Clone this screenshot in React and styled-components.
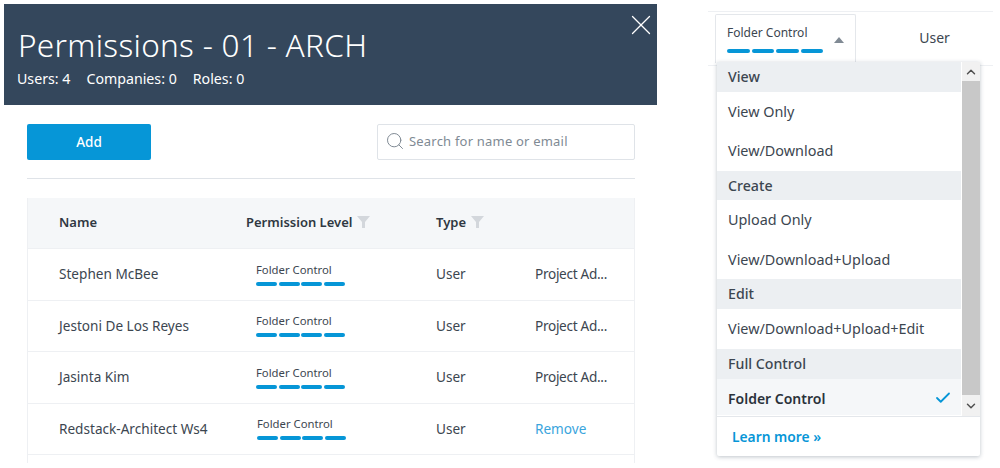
import React from "react";
import styled, { createGlobalStyle } from "styled-components";
import { X, Search, Check, ChevronUp, ChevronDown } from "lucide-react";

const GlobalStyle = createGlobalStyle`
  html, body {
    margin: 0;
    padding: 0;
    background: #fff;
    overflow: hidden;
  }
  body {
    font-family: "Noto Sans", "Open Sans", sans-serif;
    color: #3c4650;
  }
`;

const Page = styled.div`
  width: 1000px;
  height: 468px;
  display: flex;
  overflow: hidden;
`;

const Permissions = styled.div`
  width: 653px;
  margin: 4px 0 0 4px;
`;

const Banner = styled.div`
  position: relative;
  height: 101px;
  background: #34475c;
  color: #fff;
  padding: 22px 0 0 14px;
  box-sizing: border-box;
`;

const Title = styled.h1`
  margin: 0;
  font-size: 31.5px;
  font-weight: 300;
  line-height: 38px;
  letter-spacing: 0.3px;
`;

const Counts = styled.div`
  display: flex;
  gap: 16px;
  margin: 5px 0 0 -1px;
  font-size: 14.2px;
  line-height: 20px;
`;

const Close = styled.button`
  position: absolute;
  top: 4px;
  right: -1px;
  padding: 0;
  border: 0;
  background: none;
  color: #fff;
  display: flex;
`;

const Body = styled.div`
  padding: 19px 22px 0 23px;
`;

const Toolbar = styled.div`
  display: flex;
  justify-content: space-between;
  align-items: flex-start;
  height: 55px;
  box-sizing: border-box;
  border-bottom: 1px solid #dfe3e8;
`;

const AddButton = styled.button`
  width: 124px;
  height: 36px;
  border: 0;
  border-radius: 2px;
  background: #0696d7;
  color: #fff;
  font-family: inherit;
  font-size: 13.5px;
  font-weight: 500;
`;

const SearchBox = styled.div`
  width: 258px;
  height: 36px;
  box-sizing: border-box;
  border: 1px solid #dfe3e8;
  border-radius: 2px;
  display: flex;
  align-items: center;
  gap: 4px;
  padding: 0 7px 2px;
  color: #808a94;
  font-size: 13px;
  letter-spacing: 0.2px;
`;

const Table = styled.div`
  margin-top: 19px;
  border: solid #eef0f3;
  border-width: 0 1px;
  height: 265px;
`;

const Row = styled.div`
  display: grid;
  grid-template-columns: 187px 190px 99px 1fr;
  align-items: center;
  padding: 0 0 2px 31px;
  height: ${(p) => p.$height}px;
  box-sizing: border-box;
  border-bottom: 1px solid #eef0f3;
  font-size: 13.6px;
`;

const HeadRow = styled(Row)`
  background: #f5f7f9;
  font-size: 13px;
  font-weight: 600;
  color: #2f3842;
`;

const HeadCell = styled.div`
  display: flex;
  align-items: center;
  gap: 5px;
`;

const LevelCell = styled.div`
  padding-left: ${(p) => (p.$shifted ? 11 : 10)}px;
  font-size: 11.3px;
  line-height: 16px;
`;

const Bars = styled.div`
  display: flex;
  gap: ${(p) => p.$gap}px;
  margin-top: ${(p) => p.$top}px;
`;

const Bar = styled.span`
  width: ${(p) => p.$width}px;
  height: ${(p) => p.$height}px;
  border-radius: 3px;
  background: #0696d7;
`;

const RoleCell = styled.div`
  letter-spacing: -0.3px;
`;

const RemoveLink = styled.a`
  color: #3aa5dd;
`;

const Side = styled.div`
  position: relative;
  width: 285px;
  margin: 11px 0 0 51px;
`;

const SideRow = styled.div`
  display: flex;
  align-items: flex-start;
  height: 55px;
  box-sizing: border-box;
  border-top: 1px solid #eef0f3;
  border-bottom: 1px solid #eef0f3;
  padding: 2px 0 0 7px;
`;

const Trigger = styled.div`
  position: relative;
  flex: 0 0 141px;
  height: 49px;
  box-sizing: border-box;
  border: 1px solid #e4e7eb;
  border-bottom: 0;
  border-radius: 2px 2px 0 0;
  padding: 10px 0 0 11px;
  font-size: 12px;
  line-height: 16px;
`;

const Caret = styled.span`
  position: absolute;
  top: 22px;
  right: 11px;
  border: 5px solid transparent;
  border-top: 0;
  border-bottom: 6px solid #808a94;
`;

const SideType = styled.div`
  flex: 1;
  margin-top: 14px;
  padding-left: 20px;
  text-align: center;
  font-size: 14px;
`;

const Dropdown = styled.div`
  position: absolute;
  top: 51px;
  left: 9px;
  width: 263px;
  background: #fff;
  box-shadow: 0 1px 4px rgba(40, 60, 80, 0.3);
  border-radius: 0 0 2px 2px;
`;

const ListArea = styled.div`
  display: flex;
  height: 354px;
  border-bottom: 1px solid #e4e7eb;
`;

const List = styled.div`
  flex: 1;
`;

const Group = styled.div`
  height: ${(p) => p.$height}px;
  box-sizing: border-box;
  display: flex;
  align-items: center;
  padding: 0 0 1px 11px;
  background: #eceff2;
  font-size: 14.2px;
  font-weight: 500;
`;

const Item = styled.div`
  height: ${(p) => p.$height}px;
  box-sizing: border-box;
  display: flex;
  align-items: center;
  justify-content: space-between;
  padding: ${(p) => (p.$selected ? "2px 9px 0 11px" : "0 9px 1px 11px")};
  font-size: ${(p) => (p.$selected ? 14 : 14.4)}px;
  background: ${(p) => (p.$selected ? "#f5f7f9" : "#fff")};
  font-weight: ${(p) => (p.$selected ? 600 : 400)};
  color: ${(p) => (p.$selected ? "#2a323b" : "inherit")};
`;

const Scrollbar = styled.div`
  width: 18px;
  margin-left: 1px;
  display: flex;
  flex-direction: column;
  background: #f1f1f1;
  color: #505050;
`;

const ScrollButton = styled.div`
  height: ${(p) => p.$height}px;
  display: flex;
  align-items: center;
  justify-content: center;
`;

const ScrollThumb = styled.div`
  flex: 1;
  background: #c8c8c8;
`;

const Footer = styled.div`
  height: 39px;
  display: flex;
  align-items: center;
  padding-left: 15px;
  color: #0696d7;
  font-size: 13.8px;
  font-weight: 600;
`;

const people = [
  { name: "Stephen McBee", role: "Project Ad...", height: 52 },
  { name: "Jestoni De Los Reyes", role: "Project Ad...", height: 51 },
  { name: "Jasinta Kim", role: "Project Ad...", height: 52 },
  { name: "Redstack-Architect Ws4", remove: true, height: 51 },
];

const menu = [
  { group: "View" },
  { label: "View Only", height: 39 },
  { label: "View/Download", height: 40 },
  { group: "Create", height: 29 },
  { label: "Upload Only", height: 40 },
  { label: "View/Download+Upload", height: 39 },
  { group: "Edit" },
  { label: "View/Download+Upload+Edit", height: 40 },
  { group: "Full Control" },
  { label: "Folder Control", height: 36, selected: true },
];

function FilterIcon() {
  return (
    <svg width="13" height="12" viewBox="0 0 13 12">
      <path d="M0 0h13L8 6v6H5V6z" fill="#d3d7dc" />
    </svg>
  );
}

function LevelBars({ width, height, gap, top }) {
  return (
    <Bars $gap={gap} $top={top}>
      {[0, 1, 2, 3].map((i) => (
        <Bar key={i} $width={width} $height={height} />
      ))}
    </Bars>
  );
}

export default function App() {
  return (
    <Page>
      <GlobalStyle />
      <Permissions>
        <Banner>
          <Title>Permissions - 01 - ARCH</Title>
          <Counts>
            <span>Users: 4</span>
            <span>Companies: 0</span>
            <span>Roles: 0</span>
          </Counts>
          <Close>
            <X size={34} strokeWidth={0.9} />
          </Close>
        </Banner>
        <Body>
          <Toolbar>
            <AddButton>Add</AddButton>
            <SearchBox>
              <Search size={20} strokeWidth={1.2} />
              Search for name or email
            </SearchBox>
          </Toolbar>
          <Table>
            <HeadRow $height={51}>
              <div>Name</div>
              <HeadCell>
                Permission Level <FilterIcon />
              </HeadCell>
              <HeadCell>
                Type <FilterIcon />
              </HeadCell>
              <div />
            </HeadRow>
            {people.map((p) => (
              <Row key={p.name} $height={p.height}>
                <div>{p.name}</div>
                <LevelCell $shifted={p.remove}>
                  Folder Control
                  <LevelBars width={21} height={4} gap={1.5} top={4} />
                </LevelCell>
                <div>User</div>
                {p.remove ? <RemoveLink>Remove</RemoveLink> : <RoleCell>{p.role}</RoleCell>}
              </Row>
            ))}
          </Table>
        </Body>
      </Permissions>
      <Side>
        <SideRow>
          <Trigger>
            Folder Control
            <LevelBars width={22.5} height={4} gap={2} top={8} />
            <Caret />
          </Trigger>
          <SideType>User</SideType>
        </SideRow>
        <Dropdown>
          <ListArea>
            <List>
              {menu.map((m) =>
                m.group ? (
                  <Group key={m.group} $height={m.height || 30}>
                    {m.group}
                  </Group>
                ) : (
                  <Item key={m.label} $height={m.height} $selected={m.selected}>
                    {m.label}
                    {m.selected && <Check size={18} color="#0696d7" strokeWidth={2.4} />}
                  </Item>
                )
              )}
            </List>
            <Scrollbar>
              <ScrollButton $height={19}>
                <ChevronUp size={14} strokeWidth={2.5} />
              </ScrollButton>
              <ScrollThumb />
              <ScrollButton $height={21}>
                <ChevronDown size={14} strokeWidth={2.5} />
              </ScrollButton>
            </Scrollbar>
          </ListArea>
          <Footer>Learn more »</Footer>
        </Dropdown>
      </Side>
    </Page>
  );
}
